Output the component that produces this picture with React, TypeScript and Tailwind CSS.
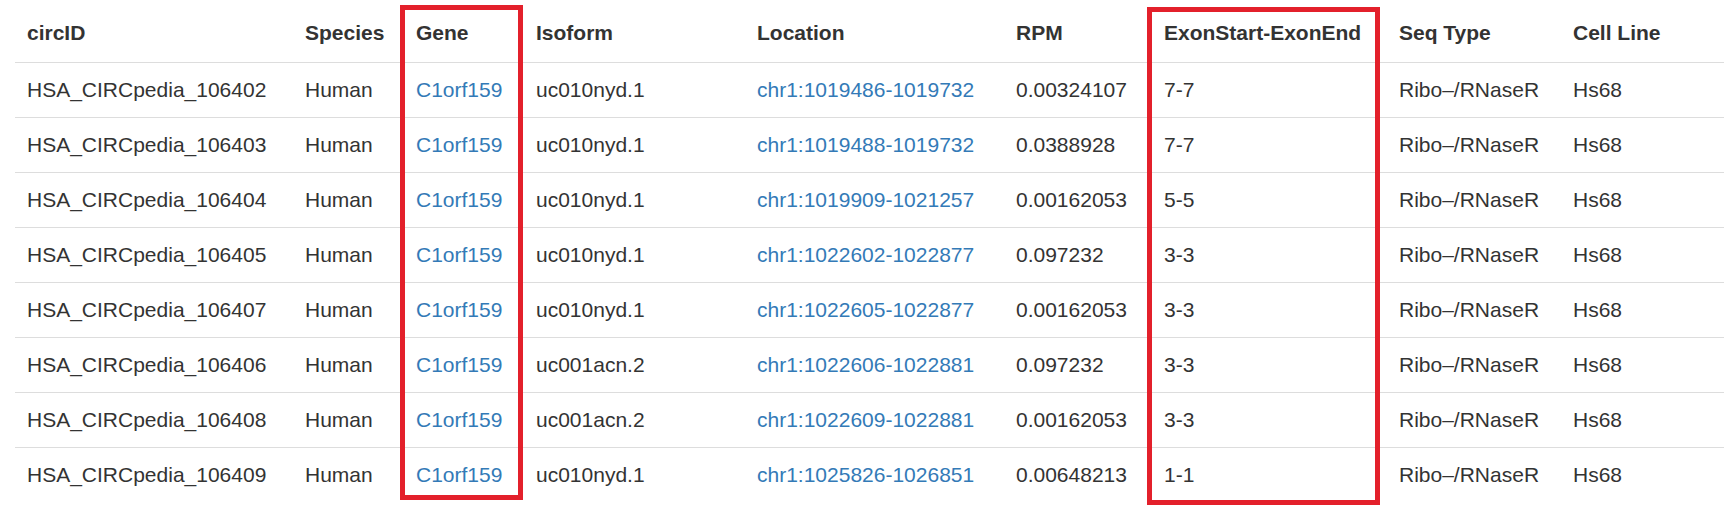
import React from "react";

const rows = [
  ["HSA_CIRCpedia_106402", "uc010nyd.1", "chr1:1019486-1019732", "0.00324107", "7-7"],
  ["HSA_CIRCpedia_106403", "uc010nyd.1", "chr1:1019488-1019732", "0.0388928", "7-7"],
  ["HSA_CIRCpedia_106404", "uc010nyd.1", "chr1:1019909-1021257", "0.00162053", "5-5"],
  ["HSA_CIRCpedia_106405", "uc010nyd.1", "chr1:1022602-1022877", "0.097232", "3-3"],
  ["HSA_CIRCpedia_106407", "uc010nyd.1", "chr1:1022605-1022877", "0.00162053", "3-3"],
  ["HSA_CIRCpedia_106406", "uc001acn.2", "chr1:1022606-1022881", "0.097232", "3-3"],
  ["HSA_CIRCpedia_106408", "uc001acn.2", "chr1:1022609-1022881", "0.00162053", "3-3"],
  ["HSA_CIRCpedia_106409", "uc010nyd.1", "chr1:1025826-1026851", "0.00648213", "1-1"],
];

const headers = ["circID", "Species", "Gene", "Isoform", "Location", "RPM", "ExonStart-ExonEnd", "Seq Type", "Cell Line"];

const grid =
  "grid grid-cols-[278px_111px_120px_221px_259px_148px_235px_174px_163px] items-center";

export default function App() {
  return (
    <div
      className="relative w-[1728px] h-[511px] bg-white overflow-hidden text-[#333] text-[21px]"
      style={{ fontFamily: '"Liberation Sans", Arial, Helvetica, sans-serif' }}
    >
      <div className="pt-[3px] pl-[15px] w-[1724px]">
        <div className={`${grid} h-[59px] font-bold text-[21px]`}>
          {headers.map((h) => (
            <div key={h} className="px-[12px] whitespace-nowrap">
              {h}
            </div>
          ))}
        </div>
        {rows.map((r) => (
          <div key={r[0]} className={`${grid} h-[55px] border-t border-[#dddddd] box-border`}>
            <div className="px-[12px] whitespace-nowrap">{r[0]}</div>
            <div className="px-[12px] whitespace-nowrap">Human</div>
            <div className="px-[12px] whitespace-nowrap text-[#337ab7]">C1orf159</div>
            <div className="px-[12px] whitespace-nowrap">{r[1]}</div>
            <div className="px-[12px] whitespace-nowrap text-[#337ab7]">{r[2]}</div>
            <div className="px-[12px] whitespace-nowrap">{r[3]}</div>
            <div className="px-[12px] whitespace-nowrap">{r[4]}</div>
            <div className="px-[12px] whitespace-nowrap">Ribo–/RNaseR</div>
            <div className="px-[12px] whitespace-nowrap">Hs68</div>
          </div>
        ))}
      </div>
      <div className="absolute left-[400px] top-[5px] w-[123px] h-[495px] border-[5px] border-[#e3202b]" />
      <div className="absolute left-[1147px] top-[7px] w-[233px] h-[498px] border-[5px] border-[#e3202b]" />
    </div>
  );
}
